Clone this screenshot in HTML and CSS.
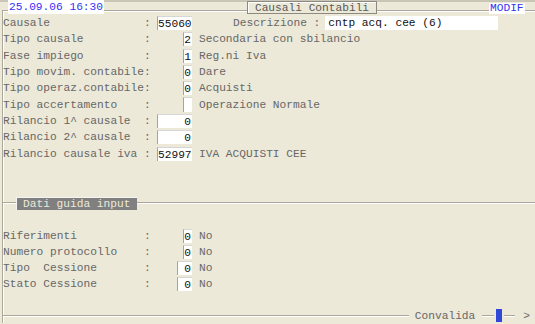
FILE: index.html
```html
<!DOCTYPE html>
<html lang="it">
<head>
    <meta charset="UTF-8">
    <title>Causali Contabili</title>
    <link rel="stylesheet" href="styles.css">
</head>
<body>
    <div class="window">
        <div class="header">
            <span class="date">25.09.06 16:30</span>
            <span class="title">Causali Contabili</span>
            <span class="mode">MODIF</span>
        </div>

        <div class="rows">
            <div class="row">
                <span class="lbl">Causale              :</span>
                <span class="fld"><span class="box w5">55060</span></span>
                <span class="lbl-desc">Descrizione :</span>
                <span class="dbox">cntp acq. cee (6)</span>
            </div>
            <div class="row">
                <span class="lbl">Tipo causale         :</span>
                <span class="fld"><span class="box">2</span></span>
                <span class="desc">Secondaria con sbilancio</span>
            </div>
            <div class="row">
                <span class="lbl">Fase impiego         :</span>
                <span class="fld"><span class="box">1</span></span>
                <span class="desc">Reg.ni Iva</span>
            </div>
            <div class="row">
                <span class="lbl">Tipo movim. contabile:</span>
                <span class="fld"><span class="box">0</span></span>
                <span class="desc">Dare</span>
            </div>
            <div class="row">
                <span class="lbl">Tipo operaz.contabile:</span>
                <span class="fld"><span class="box">0</span></span>
                <span class="desc">Acquisti</span>
            </div>
            <div class="row">
                <span class="lbl">Tipo accertamento    :</span>
                <span class="fld"><span class="box empty"></span></span>
                <span class="desc">Operazione Normale</span>
            </div>
            <div class="row">
                <span class="lbl">Rilancio 1^ causale  :</span>
                <span class="fld"><span class="box w5">0</span></span>
            </div>
            <div class="row">
                <span class="lbl">Rilancio 2^ causale  :</span>
                <span class="fld"><span class="box w5">0</span></span>
            </div>
            <div class="row">
                <span class="lbl">Rilancio causale iva :</span>
                <span class="fld"><span class="box w5">52997</span></span>
                <span class="desc">IVA ACQUISTI CEE</span>
            </div>
        </div>

        <div class="sect">
            <span class="line lead"></span>
            <span class="legend">Dati guida input</span>
            <span class="line"></span>
        </div>

        <div class="rows lower">
            <div class="row">
                <span class="lbl">Riferimenti          :</span>
                <span class="fld"><span class="box">0</span></span>
                <span class="desc">No</span>
            </div>
            <div class="row">
                <span class="lbl">Numero protocollo    :</span>
                <span class="fld"><span class="box">0</span></span>
                <span class="desc">No</span>
            </div>
            <div class="row">
                <span class="lbl">Tipo  Cessione       :</span>
                <span class="fld"><span class="box w2">0</span></span>
                <span class="desc">No</span>
            </div>
            <div class="row">
                <span class="lbl">Stato Cessione       :</span>
                <span class="fld"><span class="box w2">0</span></span>
                <span class="desc">No</span>
            </div>
        </div>

        <div class="footer">
            <span class="line"></span>
            <span class="action">Convalida</span>
            <span class="line short"></span>
            <span class="cursor"></span>
            <span class="line short2"></span>
            <span class="next">&gt;</span>
        </div>
    </div>
</body>
</html>
```

FILE: styles.css
```css
body {
    margin: 0;
    width: 535px;
    height: 324px;
    overflow: hidden;
    font-family: "Liberation Mono", "Courier New", monospace;
    font-size: 11.2px;
    color: #676767;
    background: linear-gradient(#c9c6b8, #c9c6b8) top / 100% 2px no-repeat, #ece9d8;
}
.window {
    margin: 10px 0 0 2px;
    border-left: 1px solid #aca899;
    border-top: 1px solid #aca899;
    box-shadow: inset 1px 1px 0 #ffffff;
}
.header {
    margin-top: -11px;
    height: 15px;
    display: flex;
    align-items: flex-start;
}
.date {
    margin-left: 5px;
    width: 96px;
    height: 14px;
    line-height: 14px;
    padding-left: 1px;
    box-sizing: border-box;
    background-color: #ffffff;
    color: #3232f5;
}
.title {
    margin: 1px 0 0 143px;
    width: 130px;
    height: 13px;
    line-height: 12px;
    box-sizing: border-box;
    text-align: center;
    border: 1px solid #8c8a80;
    box-shadow: inset 1px 1px 0 #ffffff;
    background-color: #ece9d8;
    color: #5a5a5a;
}
.mode {
    margin: 3px 0 0 112px;
    width: 36px;
    height: 11px;
    line-height: 11px;
    padding-left: 1px;
    box-sizing: border-box;
    background-color: #ffffff;
    color: #3232f5;
}
.row {
    display: flex;
    align-items: center;
    height: 16.3px;
    white-space: pre;
}
.lower .row {
    height: 16px;
}
.lbl {
    width: 154px;
    flex: none;
}
.fld {
    width: 35px;
    flex: none;
    display: flex;
    justify-content: flex-end;
}
.box {
    min-width: 8px;
    height: 14px;
    line-height: 14px;
    padding-right: 1px;
    box-sizing: border-box;
    text-align: right;
    background-color: #ffffff;
    border-left: 1px solid #a3a3a3;
    border-top: 1px solid #d6d6d6;
    color: #111111;
}
.box.empty {
    width: 9px;
    height: 15px;
}
.box.w5 {
    width: 35px;
}
.box.w2 {
    width: 15px;
}
.desc {
    margin-left: 7px;
}
.lbl-desc {
    margin-left: 41px;
}
.dbox {
    margin-left: 5px;
    width: 173px;
    height: 14px;
    line-height: 14px;
    padding-left: 3px;
    box-sizing: border-box;
    background-color: #ffffff;
    color: #111111;
}
.sect {
    margin-top: 35.3px;
    height: 13px;
    display: flex;
    align-items: center;
}
.line {
    flex: 1;
    height: 0;
    border-top: 1px solid #aca899;
    border-bottom: 1px solid #ffffff;
}
.line.lead {
    flex: none;
    width: 13px;
}
.legend {
    height: 13px;
    line-height: 12px;
    padding: 0 7px 0 6px;
    box-sizing: border-box;
    background-color: #808080;
    border-top: 1px solid #f4f4f4;
    border-left: 1px solid #f4f4f4;
    color: #ece9d8;
}
.lower {
    margin-top: 18px;
}
.footer {
    margin: 17px 0 -7px 0;
    height: 14px;
    display: flex;
    align-items: center;
}
.action {
    margin: 0 7px 0 6px;
}
.line.short {
    flex: none;
    width: 12px;
}
.cursor {
    margin: 0 2px;
    width: 6px;
    height: 13px;
    background-color: #3048d8;
}
.line.short2 {
    flex: none;
    width: 11px;
}
.next {
    margin: 0 5px 0 8px;
}
```
